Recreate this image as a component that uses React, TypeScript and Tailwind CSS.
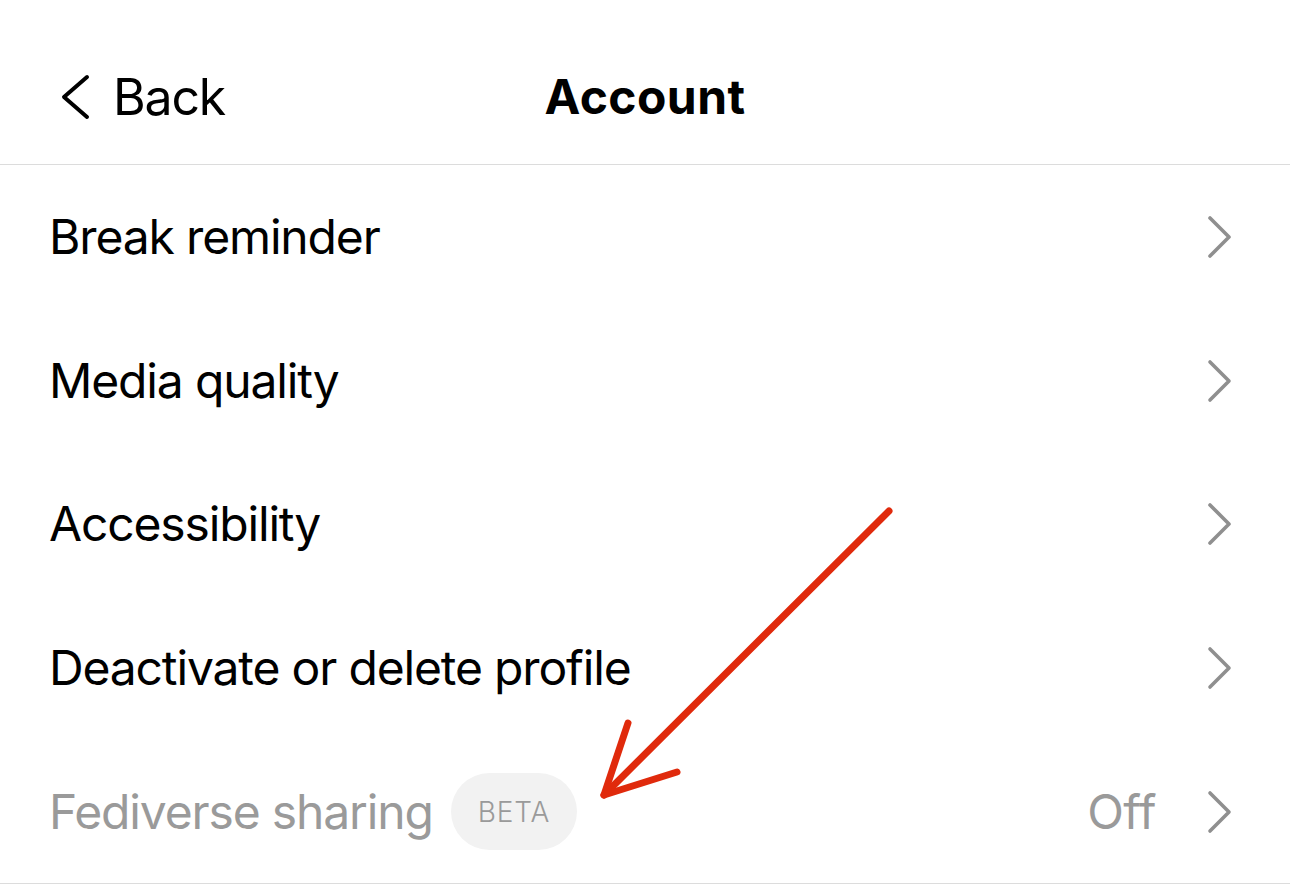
import React from "react";

const Chevron = () => (
  <svg width="26" height="44" viewBox="0 0 26 44" className="shrink-0">
    <path d="M4 3 L23 22 L4 41" fill="none" stroke="#8f8f8f" strokeWidth="3.6" strokeLinecap="round" strokeLinejoin="round" />
  </svg>
);

const Row = ({ label }: { label: string }) => (
  <div className="flex h-[143.8px] items-center justify-between pl-[49px] pr-[58px]">
    <span className="text-[48px] tracking-[-1.15px] text-black">{label}</span>
    <Chevron />
  </div>
);

export default function App() {
  return (
    <div className="relative h-[887px] w-[1290px] overflow-hidden bg-white" style={{ fontFamily: "Inter, 'Noto Sans', sans-serif" }}>
      <header className="relative flex h-[165px] items-center border-b border-[#dcdcdc] pt-[30px]">
        <div className="flex items-center pl-[61px]">
          <svg width="30" height="46" viewBox="0 0 30 46">
            <path d="M26 3 L3 23 L26 43" fill="none" stroke="#000" strokeWidth="4" strokeLinecap="round" strokeLinejoin="round" />
          </svg>
          <span className="ml-[22px] text-[50px] tracking-[-1.2px] text-black">Back</span>
        </div>
        <h1 className="absolute left-0 right-0 top-[30px] bottom-0 flex items-center justify-center text-[48px] font-bold tracking-[0.4px] text-black">Account</h1>
      </header>
      <Row label="Break reminder" />
      <Row label="Media quality" />
      <Row label="Accessibility" />
      <Row label="Deactivate or delete profile" />
      <div className="flex h-[143.8px] items-center justify-between border-b border-[#dcdcdc] pl-[49px] pr-[58px]">
        <div className="flex items-center">
          <span className="text-[48px] tracking-[-1.15px] text-[#9a9a9a]">Fediverse sharing</span>
          <span className="ml-[18px] flex h-[77px] items-center rounded-full bg-[#f2f2f2] px-[27px] text-[28px] font-light tracking-[0.8px] text-[#9a9a9a]">BETA</span>
        </div>
        <div className="flex items-center">
          <span className="mr-[50px] text-[48px] tracking-[-0.5px] text-[#9a9a9a]">Off</span>
          <Chevron />
        </div>
      </div>
      <svg className="pointer-events-none absolute left-0 top-0" width="1290" height="887">
        <g fill="none" stroke="#e02a0c" strokeWidth="7" strokeLinecap="round" strokeLinejoin="round">
          <path d="M889 511 L604 795" />
          <path d="M628 723 L604 795 L677 772" />
        </g>
      </svg>
    </div>
  );
}
